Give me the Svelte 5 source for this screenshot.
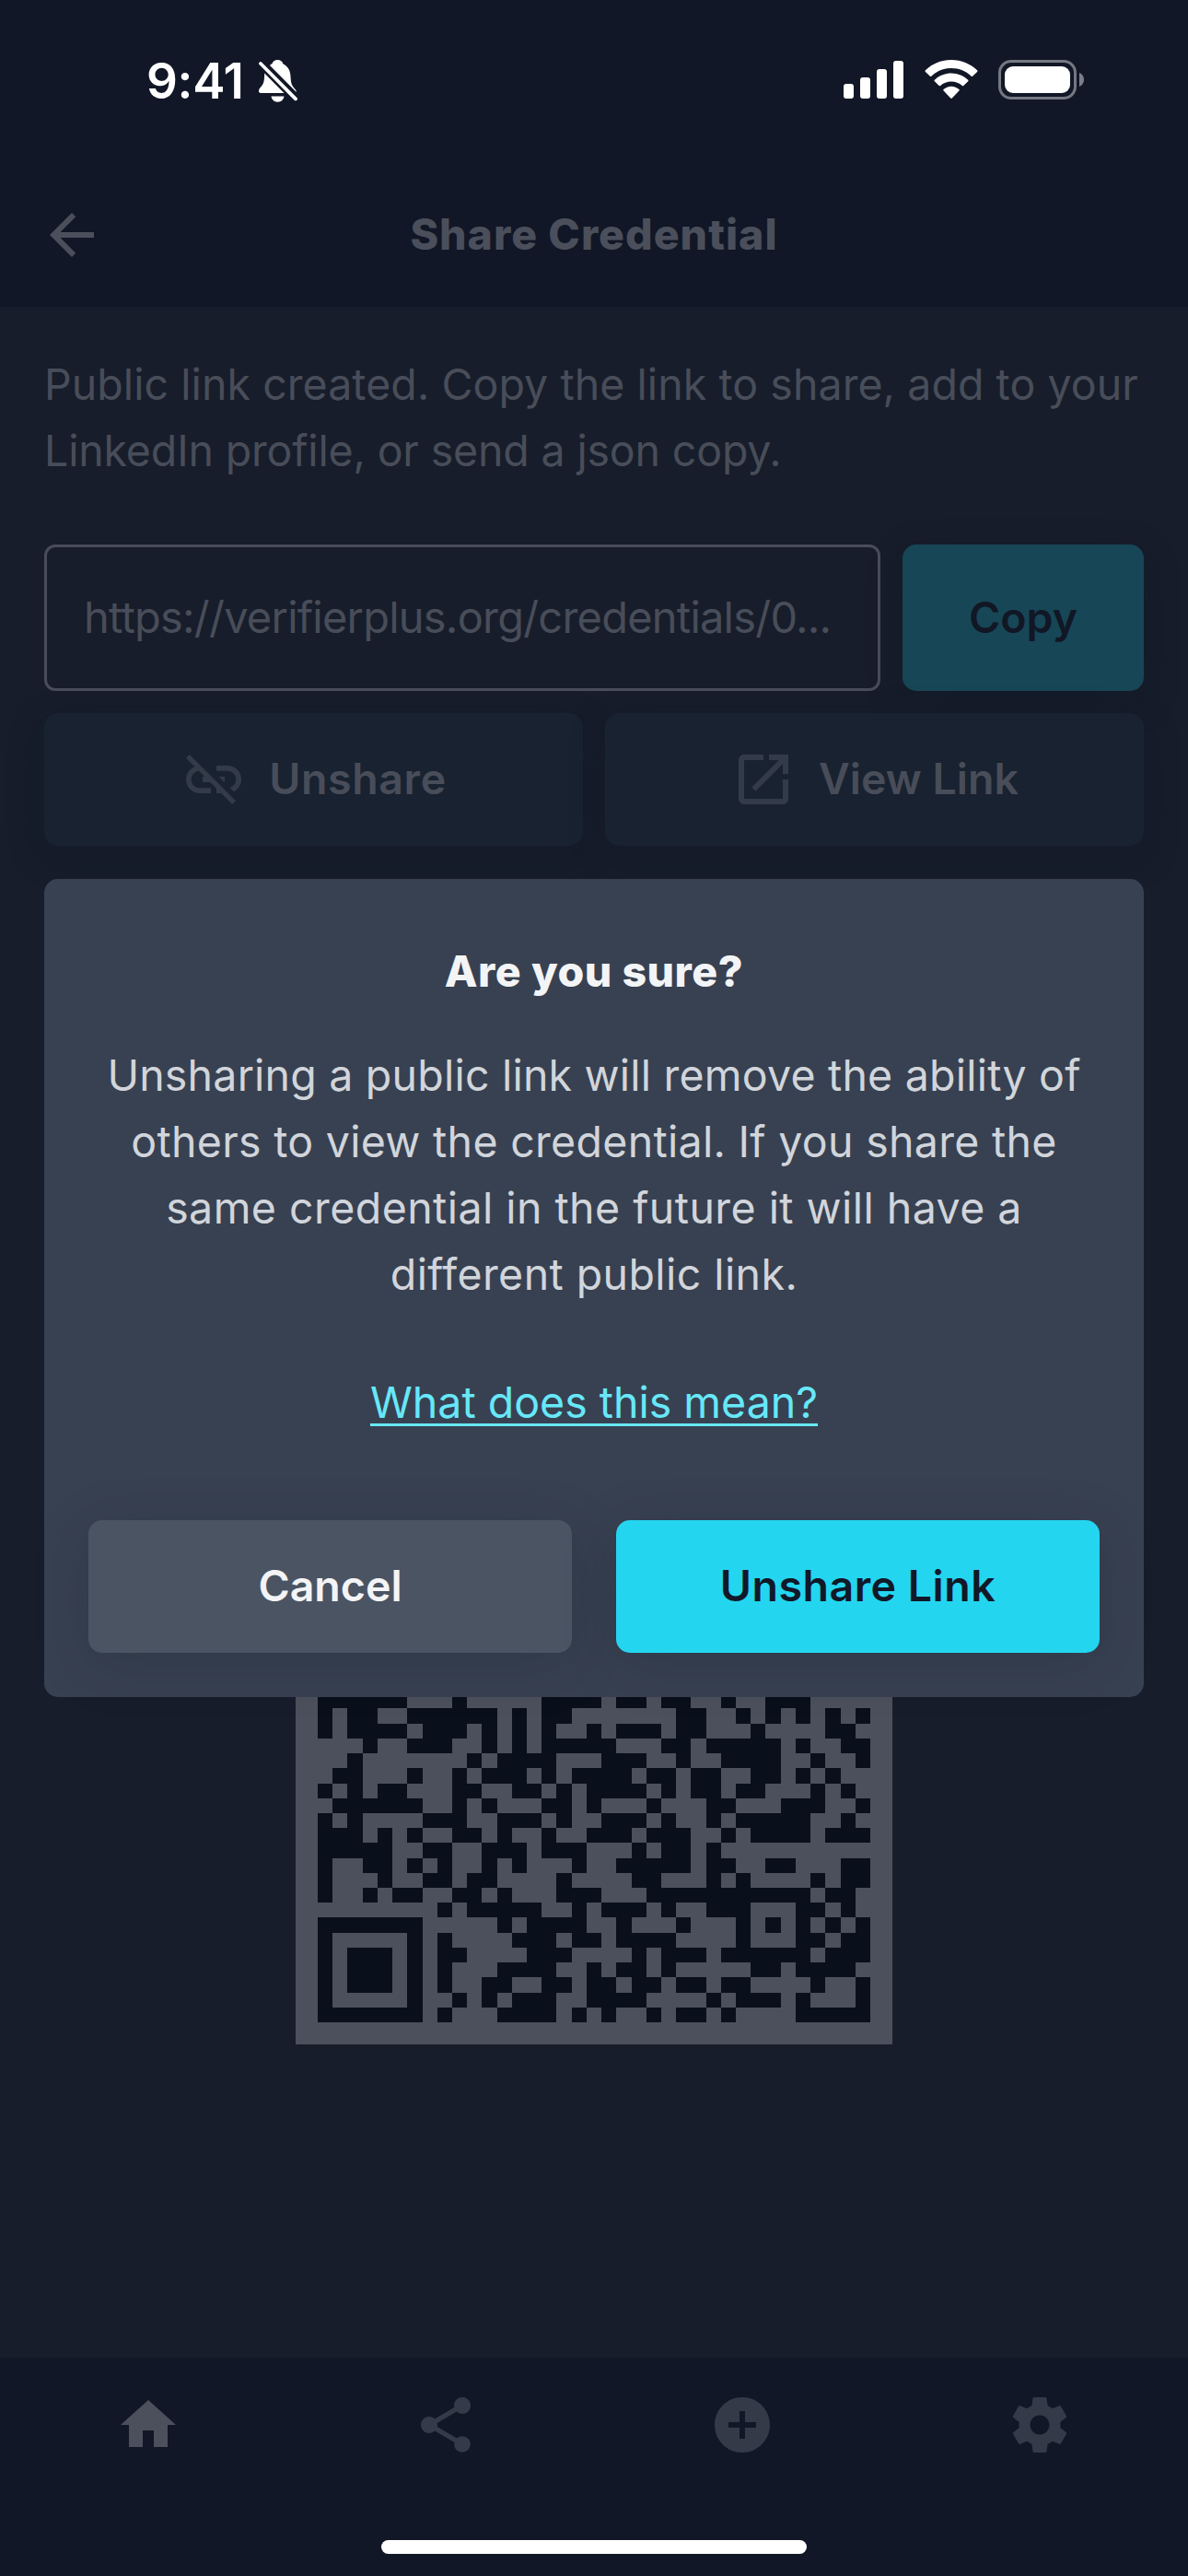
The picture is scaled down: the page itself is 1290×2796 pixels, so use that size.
<script>
  // Dark modules of the QR code, one entry per row, as column ranges.
  const firstRow = 15;
  const qrRows = [
    '0-5,9,15-18,20-21,23-24,27,30-32',
    '0,2-3,6-11,13,15-16,24-25,28,30,32,34,36',
    '0,2-5,7-9,11,13,15,18,20-22,24-25,29,34-35',
    '3,6-8,11,13,15-19,23-24,26-30,32,35-36',
    '2,10,12-15,19-21,24,27-30,33,36',
    '1-2,6,9,11-13,15,17-20,22-23,25-26,29-30,32,34',
    '0,2,4-5,9-10,13-14,16,18-21,23,25-26,28-29,33,35',
    '1-6,9,11,15-16,18,22,26-27,31-33,36',
    '0,2,7-9,12-14,16,19-21,23,26,28-32,35',
    '0-2,4,6,9-10,12,15,18-20,22-24,27,29-32,34-36',
    '0-4,7-8,11-13,15-17,21,23-24,26',
    '0,3-4,6,8,11,13,17,20-24,26-27,30-31,35-36',
    '0,4,7-8,10-11,16,21-22,26,28,33,35-36',
    '0,3,5-6,9-10,12,16-18,22-32,34-35',
    '8,10-14,17,19-21,23,26-28,32-33,35',
    '0-6,12,14-17,20,24,28,30,32,34,36',
    '0,6,8,13-15,17-18,20-23,28,32-33,35-36',
    '0,2-4,6,8-9,14-16,21,23-25,27-32,34-36',
    '0,2-4,6,8,12-15,18,20-21,23,29-30,32-35',
    '0,2-4,6,8,11-12,15-16,18-19,21-22,24-25,27-28,33,36',
    '0,6,9,11,13-15,18-21,26,28-30,32,36',
    '0-6,8,12-15,17,19,22,24-25,27,32-36',
  ];
  const qrPath = qrRows
    .map((row, i) =>
      row
        .split(',')
        .map((range) => {
          const [a, b = a] = range.split('-').map(Number);
          return `M${a} ${firstRow + i}h${b - a + 1}v1h-${b - a + 1}z`;
        })
        .join('')
    )
    .join('');

  const tabs = [
    { name: 'Home', active: true, d: 'M10 20v-6h4v6h5v-8h3L12 3 2 12h3v8z' },
    {
      name: 'Share',
      d: 'M18 16.08c-.76 0-1.44.3-1.96.77L8.91 12.7c.05-.23.09-.46.09-.7s-.04-.47-.09-.7l7.05-4.11c.54.5 1.25.81 2.04.81 1.66 0 3-1.34 3-3s-1.34-3-3-3-3 1.34-3 3c0 .24.04.47.09.7L8.04 9.81C7.5 9.31 6.79 9 6 9c-1.66 0-3 1.34-3 3s1.34 3 3 3c.79 0 1.5-.31 2.04-.81l7.12 4.16c-.05.21-.08.43-.08.65 0 1.61 1.31 2.92 2.92 2.92s2.92-1.31 2.92-2.92-1.31-2.92-2.92-2.92z',
    },
    {
      name: 'Add',
      d: 'M12 2C6.48 2 2 6.48 2 12s4.48 10 10 10 10-4.48 10-10S17.52 2 12 2zm5 11h-4v4h-2v-4H7v-2h4V7h2v4h4v2z',
    },
    {
      name: 'Settings',
      d: 'M19.43 12.98c.04-.32.07-.64.07-.98s-.03-.66-.07-.98l2.11-1.65c.19-.15.24-.42.12-.64l-2-3.46c-.12-.22-.39-.3-.61-.22l-2.49 1c-.52-.4-1.08-.73-1.69-.98l-.38-2.65C14.46 2.18 14.25 2 14 2h-4c-.25 0-.46.18-.49.42l-.38 2.65c-.61.25-1.17.59-1.69.98l-2.49-1c-.23-.09-.49 0-.61.22l-2 3.46c-.13.22-.07.49.12.64l2.11 1.65c-.04.32-.07.65-.07.98s.03.66.07.98l-2.11 1.65c-.19.15-.24.42-.12.64l2 3.46c.12.22.39.3.61.22l2.49-1c.52.4 1.08.73 1.69.98l.38 2.65c.03.24.24.42.49.42h4c.25 0 .46-.18.49-.42l.38-2.65c.61-.25 1.17-.59 1.69-.98l2.49 1c.23.09.49 0 .61-.22l2-3.46c.12-.22.07-.49-.12-.64l-2.11-1.65zM12 15.5c-1.93 0-3.5-1.57-3.5-3.5s1.57-3.5 3.5-3.5 3.5 1.57 3.5 3.5-1.57 3.5-3.5 3.5z',
    },
  ];
</script>

<div class="screen">
  <div class="status">
    <span class="time">9:41</span>
    <svg class="bell" viewBox="0 0 42 46" width="42" height="46">
      <path d="M12 6c1-1.200 2-1.500 2.500-2C15.500 1.500 17.500 0 20.500 0s5.200 1.500 6 4.500c4.500 2 7.500 6 8 13 .3 6 .8 9 3 12 1.700 2 3.500 3.500 3.300 5.500z" />
      <path d="M6.200 14.500L27.500 36H3C1 36 0 35.200 0 33.700c0-2 1.500-3.500 3-5.200 2.500-3 3-6 3.200-14z" />
      <path d="M13.500 39.500h14c-.5 3.500-3.300 6.200-7 6.200s-6.500-2.700-7-6.200z" />
      <path d="M2 4L40 42.300" stroke="#fff" stroke-width="3.800" stroke-linecap="round" />
    </svg>
    <span class="spacer"></span>
    <svg class="signal" viewBox="0 0 65 41" width="65" height="41">
      <rect x="0" y="25" width="11" height="16" rx="3" />
      <rect x="18" y="18" width="11" height="23" rx="3" />
      <rect x="36" y="9" width="11" height="32" rx="3" />
      <rect x="54" y="0" width="11" height="41" rx="3" />
    </svg>
    <svg class="wifi" viewBox="0 0 58 42" width="58" height="42">
      <path d="M29 9c8.500 0 16 3.200 21.700 8.700.4.400 1 .4 1.400 0l5-4.800c.5-.5.500-1.100 0-1.600C49.800 4.300 40 0 29 0S8.200 4.300.9 11.300c-.5.500-.5 1.100 0 1.600l5 4.800c.4.400 1 .4 1.400 0C13 12.200 20.500 9 29 9z" />
      <path d="M29 23.500c4.600 0 8.600 1.700 11.800 4.500.4.400 1 .4 1.500 0l4.900-4.800c.4-.4.400-1.100 0-1.500-4.600-4.300-11.100-7.200-18.200-7.200s-13.600 2.900-18.200 7.200c-.4.400-.4 1.100 0 1.500l4.900 4.800c.5.400 1.100.4 1.500 0 3.200-2.800 7.200-4.500 11.800-4.500z" />
      <path d="M37.400 32c.5.400.5 1.100 0 1.500l-7.600 7.900c-.4.500-1.200.5-1.600 0l-7.600-7.900c-.5-.4-.5-1.100 0-1.500 2.200-1.900 5.200-3.200 8.400-3.200s6.200 1.300 8.400 3.200z" />
    </svg>
    <svg class="battery" viewBox="0 0 94 43" width="94" height="43">
      <rect x="1.500" y="1.500" width="82" height="40" rx="12.500" fill="none" stroke="#fff" stroke-opacity=".42" stroke-width="3" />
      <rect x="7" y="7" width="71" height="29" rx="9" />
      <path d="M88 14c3.200 1.300 5 4.200 5 7.500s-1.800 6.200-5 7.500z" fill-opacity=".45" />
    </svg>
  </div>

  <header>
    <svg class="icon back" viewBox="0 0 24 24"><path d="M20 11H7.830l5.590-5.590L12 4l-8 8 8 8 1.410-1.410L7.830 13H20v-2z" /></svg>
    <h1>Share Credential</h1>
  </header>

  <main>
    <p class="intro">
      <span class="i1">Public link created. Copy the link to share, add to your</span>
      <span class="i2">LinkedIn profile, or send a json copy.</span>
    </p>
    <div class="link-row">
      <div class="field"><span>https://verifierplus.org/credentials/0...</span></div>
      <button class="copy"><span>Copy</span></button>
    </div>
    <div class="actions">
      <button class="action">
        <svg class="icon" viewBox="0 0 24 24"><path d="M17 7h-4v1.900h4c1.710 0 3.100 1.390 3.100 3.100 0 1.430-.98 2.630-2.310 2.980l1.460 1.460C20.880 15.610 22 13.950 22 12c0-2.760-2.240-5-5-5zm-1 4h-2.190l2 2H16zM2 4.270l3.110 3.110C3.290 8.120 2 9.910 2 12c0 2.760 2.240 5 5 5h4v-1.900H7c-1.710 0-3.100-1.390-3.100-3.100 0-1.590 1.210-2.900 2.760-3.070L8.730 11H8v2h2.730L13 15.270V17h1.730l4.010 4L20 19.740 3.270 3 2 4.270z" /></svg>
        <span class="a1">Unshare</span>
      </button>
      <button class="action">
        <svg class="icon" viewBox="0 0 24 24"><path d="M19 19H5V5h7V3H5c-1.110 0-2 .9-2 2v14c0 1.100.89 2 2 2h14c1.100 0 2-.9 2-2v-7h-2v7zM14 3v2h3.590l-9.830 9.830 1.410 1.410L19 6.410V10h2V3h-7z" /></svg>
        <span class="a2">View Link</span>
      </button>
    </div>
    <div class="qr">
      <svg viewBox="0 0 37 37" width="600" height="600" shape-rendering="crispEdges"><path d={qrPath} /></svg>
    </div>
  </main>

  <nav>
    {#each tabs as tab}
      <div class="tab" class:active={tab.active}>
        <svg class="icon" viewBox="0 0 24 24" role="img" aria-label={tab.name}><path d={tab.d} /></svg>
      </div>
    {/each}
  </nav>
  <div class="indicator"></div>

  <div class="modal">
    <h2>Are you sure?</h2>
    <p class="message">
      <span class="m1">Unsharing a public link will remove the ability of</span>
      <span class="m2">others to view the credential. If you share the</span>
      <span class="m3">same credential in the future it will have a</span>
      <span class="m4">different public link.</span>
    </p>
    <div class="help"><span>What does this mean?</span></div>
    <div class="buttons">
      <button class="cancel"><span>Cancel</span></button>
      <button class="confirm"><span>Unshare Link</span></button>
    </div>
  </div>
</div>

<style>
  :global(body) { margin: 0; background: #171d2a; }
  .screen {
    position: relative;
    width: 1290px;
    height: 2796px;
    display: flex;
    flex-direction: column;
    overflow: hidden;
    background: #171d2a;
    font-family: Inter, "Liberation Sans", sans-serif;
    font-size: 46.500px;
    line-height: 72px;
    color: #484d59;
  }
  h1, h2, p { margin: 0; font-size: inherit; }
  button { border: 0; padding: 0 0 2px; font: inherit; font-weight: 600; display: flex; align-items: center; justify-content: center; border-radius: 15px; }
  span { white-space: nowrap; }
  .icon { width: 72px; height: 72px; fill: currentColor; flex: none; }

  .status { height: 177px; display: flex; align-items: flex-start; padding: 65px 112px 0 159px; box-sizing: border-box; background: #111726; fill: #fff; }
  .time { width: 106px; font: 600 53px/47px Inter, sans-serif; letter-spacing: -0.300px; color: #fff; }
  .bell { margin-left: 16px; }
  .spacer { flex: 1; }
  .signal { margin: 1px 23px 0 0; }
  .wifi { margin-right: 22px; }

  header { height: 156px; display: grid; grid-template-columns: 114px 1fr 114px; align-items: center; background: #111726; box-sizing: border-box; color: #4a4f5b; }
  .back { margin-left: 42px; }
  h1 { text-align: center; font-weight: 800; letter-spacing: 1px; padding-bottom: 2px; }

  main { flex: 1; padding: 48px 48px 0; }
  .intro span, .message span { display: block; }
  .i1 { letter-spacing: 0.060px; }
  .i2 { letter-spacing: -0.160px; }
  .link-row { display: grid; grid-template-columns: 908px 262px; gap: 24px; height: 159px; margin-top: 66px; }
  .field { border: 3px solid #484d59; border-radius: 12px; padding: 0 0 2px 40px; display: flex; align-items: center; font-size: 47px; letter-spacing: -0.780px; }
  .copy { background: #174657; color: #111725; box-shadow: 0 12px 40px rgba(15, 23, 42, .22); }
  .actions { display: grid; grid-template-columns: 1fr 1fr; gap: 24px; margin-top: 24px; }
  .action { height: 144px; background: #192230; color: #484d59; gap: 24px; box-shadow: 0 12px 40px rgba(15, 23, 42, .22); padding: 0; }
  .action span { padding-bottom: 2px; }
  .a1 { letter-spacing: 0.600px; }
  .action .icon { color: #333b48; }
  .qr { width: 600px; height: 600px; margin: 653px auto 0; padding: 24px; background: #4b505c; fill: #0a101b; }
  .qr svg { display: block; }

  nav { height: 237px; display: grid; grid-template-columns: repeat(4, 1fr); background: #111726; }
  .tab { display: flex; justify-content: center; padding-top: 37px; color: #353a48; }
  .tab.active { color: #4b505c; }
  .indicator { position: absolute; left: 414px; top: 2757px; width: 462px; height: 15px; border-radius: 8px; background: #fff; }

  .modal {
    position: absolute; left: 48px; top: 954px; width: 1194px; height: 888px; box-sizing: border-box;
    padding: 64px 48px 48px; border-radius: 15px; background: #384151; text-align: center; color: #d1d5db;
    display: flex; flex-direction: column;
  }
  h2 { color: #f3f4f6; font-weight: 800; letter-spacing: 0.500px; }
  .message { margin-top: 41px; }
  .m1 { letter-spacing: 0.210px; }
  .m2 { letter-spacing: 0.300px; }
  .m3 { letter-spacing: 0.450px; }
  .m4 { letter-spacing: 0.420px; }
  .help { margin-top: 67px; color: #67e8f9; text-decoration: underline; text-decoration-thickness: 3px; text-underline-offset: 6px; }
  .buttons { display: grid; grid-template-columns: 1fr 1fr; gap: 48px; margin-top: auto; }
  .buttons button { height: 144px; box-shadow: 0 12px 60px rgba(17, 24, 39, .2); }
  .buttons .cancel { background: #4b5463; color: #f3f4f6; }
  .buttons .confirm { background: #24d5f0; color: #111827; letter-spacing: 0.500px; }
</style>
